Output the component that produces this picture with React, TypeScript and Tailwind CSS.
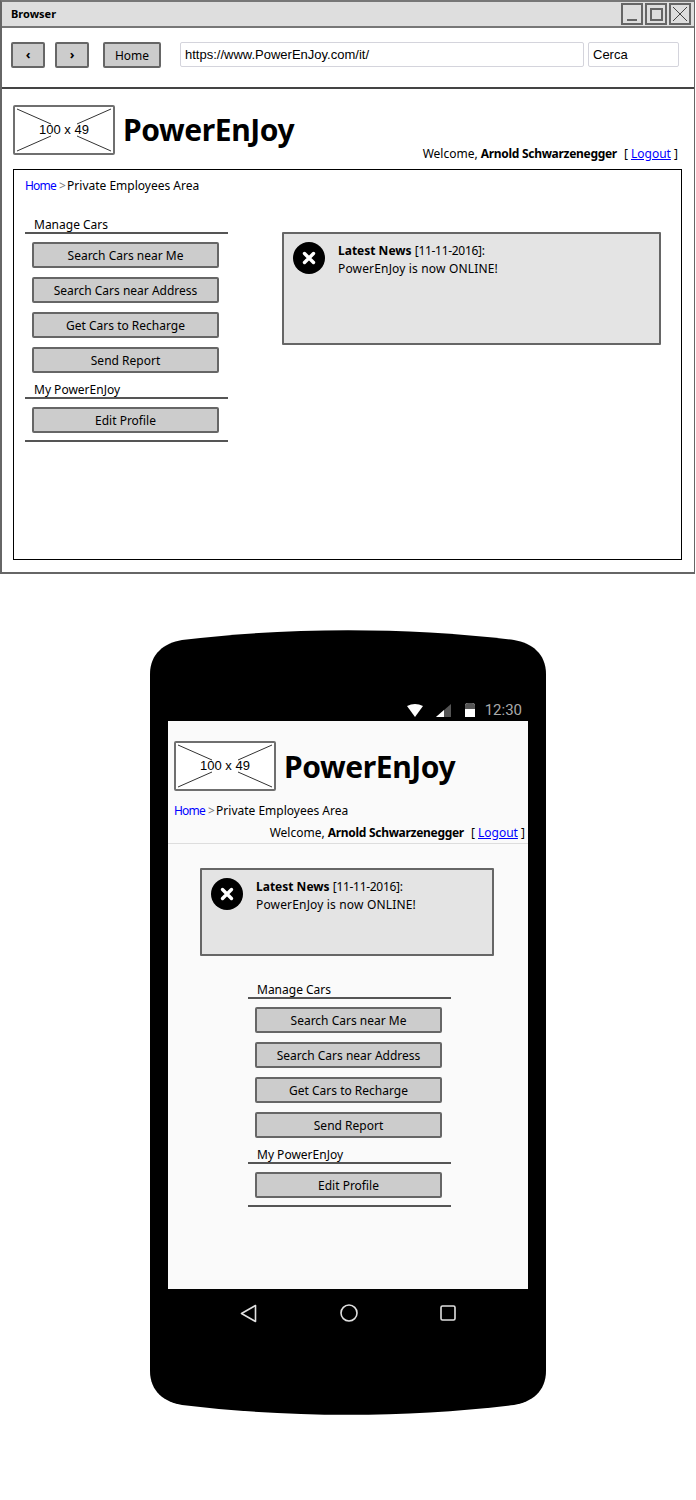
const sketch = "font-['Noto_Sans',sans-serif]";

const groups = [
  { title: "Manage Cars", items: ["Search Cars near Me", "Search Cars near Address", "Get Cars to Recharge", "Send Report"] },
  { title: "My PowerEnJoy", items: ["Edit Profile"] }
];

function Placeholder() {
  return (
    <div className="relative flex h-[50px] w-[102px] shrink-0 items-center justify-center rounded-[2px] border-2 border-[#6f6f6f] bg-white">
      <svg className="absolute inset-0 h-full w-full" viewBox="0 0 98 46" fill="none" stroke="#333" strokeWidth="1">
        <path d="M2 2 L36 17 M96 2 L62 17 M2 44 L36 29 M96 44 L62 29" />
      </svg>
      <span className="relative font-['Liberation_Sans',sans-serif] text-[13px] text-black">100 x 49</span>
    </div>
  );
}

function Logo() {
  return <h1 className={`${sketch} text-[30px] leading-none font-bold tracking-[-0.4px] text-black`}>PowerEnJoy</h1>;
}

function Crumbs() {
  return (
    <p className={`${sketch} text-[12px] leading-4 text-black`}>
      <a className="tracking-[-0.8px] text-[#0000ff]">Home</a> <span className="tracking-[-2px] text-[#777]">&gt;</span> Private Employees Area
    </p>
  );
}

function Welcome() {
  return (
    <p className={`${sketch} text-[12px] leading-4 whitespace-nowrap text-black`}>
      Welcome, <b className="tracking-[-0.3px]">Arnold Schwarzenegger</b>
      <span className="ml-[7px]">[ </span>
      <a className="text-[#0000ff] underline">Logout</a> ]
    </p>
  );
}

function Menu() {
  return (
    <div className="w-[203px]">
      {groups.map((group, g) => (
        <div key={group.title}>
          <p className={`${sketch} pl-[9px] text-[12px] leading-[15px] text-black ${g === 0 ? "" : "mt-[9px]"}`}>{group.title}</p>
          <div className="h-[2px] bg-[#555]" />
          <div className="mt-2 flex flex-col gap-[9px] pl-[7px]">
            {group.items.map((item) => (
              <button
                key={item}
                className={`${sketch} h-[26px] w-[187px] rounded-[2px] border-2 border-[#666] bg-[#cccccc] pt-px text-[12px] text-black`}
              >
                {item}
              </button>
            ))}
          </div>
        </div>
      ))}
      <div className="mt-[7px] h-[2px] bg-[#555]" />
    </div>
  );
}

function News({ className }: { className: string }) {
  return (
    <div className={`flex rounded-[1px] border-2 border-[#666] bg-[#e4e4e4] ${className}`}>
      <div className="mt-2 ml-[9px] flex h-8 w-8 shrink-0 items-center justify-center rounded-full bg-black">
        <svg width="14" height="14" viewBox="0 0 14 14" stroke="#fff" strokeWidth="3.4" strokeLinecap="round">
          <path d="M2.5 2.5 L11.5 11.5 M11.5 2.5 L2.5 11.5" />
        </svg>
      </div>
      <div className={`${sketch} mt-[8px] ml-[13px] text-[12px] leading-[18px] text-black`}>
        <p>
          <b>Latest News</b> <span className="tracking-[-0.3px]">[11-11-2016]:</span>
        </p>
        <p className="tracking-[0.16px]">PowerEnJoy is now ONLINE!</p>
      </div>
    </div>
  );
}

function BrowserWindow() {
  return (
    <div className="flex h-[574px] w-[695px] flex-col border-2 border-[#666] border-t-[#777] border-r-[1px]">
      <div className="flex h-[26px] shrink-0 items-center justify-between border-b-2 border-[#777] bg-[#dedede] pr-[3px] pl-[9px]">
        <span className={`${sketch} text-[11px] font-bold text-black`}>Browser</span>
        <div className="flex gap-[2px]">
          <div className="flex h-[22px] w-[22px] items-end justify-center border-2 border-[#666] pb-[2px]">
            <div className="h-[2px] w-[10px] bg-[#666]" />
          </div>
          <div className="flex h-[22px] w-[22px] items-center justify-center border-2 border-[#666]">
            <div className="h-[13px] w-[13px] border-2 border-[#666]" />
          </div>
          <div className="flex h-[22px] w-[22px] items-center justify-center border-2 border-[#666]">
            <svg width="16" height="16" viewBox="0 0 16 16" stroke="#444" strokeWidth="1">
              <path d="M1 1 L15 15 M15 1 L1 15" />
            </svg>
          </div>
        </div>
      </div>

      <div className="flex h-[61px] shrink-0 items-start border-b-2 border-[#444] pt-[14px] pl-[9px]">
        <button className={`${sketch} h-[26px] w-[34px] rounded-[2px] border-2 border-[#666] bg-[#ccc] text-[13px] font-bold text-black`}>‹</button>
        <button className={`${sketch} ml-[10px] h-[26px] w-[34px] rounded-[2px] border-2 border-[#666] bg-[#ccc] text-[13px] font-bold text-black`}>›</button>
        <button className={`${sketch} ml-[14px] h-[26px] w-[58px] rounded-[2px] border-2 border-[#666] bg-[#ccc] pt-px text-[12px] text-black`}>Home</button>
        <div className="ml-[19px] flex h-[25px] w-[404px] items-center rounded-[2px] border border-[#d4d4dc] px-[4px] pt-px font-['Liberation_Sans',sans-serif] text-[13px] text-black">
          https://www.PowerEnJoy.com/it/
        </div>
        <div className="ml-[4px] flex h-[25px] w-[91px] items-center rounded-[2px] border border-[#d4d4dc] px-[4px] pt-px font-['Liberation_Sans',sans-serif] text-[13px] text-black">
          Cerca
        </div>
      </div>

      <div className="flex h-[63px] shrink-0 pt-[16px] pl-[11px]">
        <Placeholder />
        <div className="ml-[8px] pt-[10px]">
          <Logo />
        </div>
        <div className="mt-[41px] ml-auto pr-[16px]">
          <Welcome />
        </div>
      </div>

      <div className="mx-[11px] mt-[17px] h-[391px] w-[669px] border border-black px-[11px] pt-[8px]">
        <Crumbs />
        <div className="mt-[23px] flex">
          <Menu />
          <News className="mt-[15px] ml-[54px] h-[113px] w-[379px]" />
        </div>
      </div>
    </div>
  );
}

function PhoneFrame() {
  return (
    <div className="relative mt-[56px] ml-[150px] h-[785px] w-[396px]">
      <svg className="absolute inset-0" width="396" height="785" viewBox="0 0 396 785">
        <path
          d="M0 44 C0 24 14 13 32 10 C140 -3 256 -3 364 10 C382 13 396 24 396 44 L396 741 C396 761 382 772 364 775 C256 788 140 788 32 775 C14 772 0 761 0 741 Z"
          fill="#000"
        />
      </svg>
      <div className="relative flex h-full flex-col px-[18px] pt-[69px]">
        <div className="flex h-[22px] shrink-0 items-center justify-end pr-[6px]">
          <svg width="16" height="13" viewBox="0 0 16 13">
            <path d="M0 2 Q8 -2 16 2 L8 13 Z" fill="#fff" />
          </svg>
          <svg className="ml-[13px]" width="15" height="13" viewBox="0 0 15 13">
            <path d="M0 13 L15 0 V13 Z" fill="#555" />
            <path d="M0 13 L8 6 V13 Z" fill="#fff" />
          </svg>
          <svg className="ml-[14px]" width="10" height="14" viewBox="0 0 10 14">
            <path d="M3 0 H7 Q10 0 10 3 V14 H0 V3 Q0 0 3 0 Z" fill="#fff" />
            <path d="M3 0 H7 Q10 0 10 3 V6 H0 V3 Q0 0 3 0 Z" fill="#555" />
          </svg>
          <span className="ml-[10px] font-['Roboto',sans-serif] text-[15px] text-[#aaa]">12:30</span>
        </div>

        <div className="h-[568px] shrink-0 bg-[#fafafa]">
          <div className="flex items-start pt-[20px] pl-[6px]">
            <Placeholder />
            <div className="ml-[8px] pt-[11px]">
              <Logo />
            </div>
          </div>
          <div className="mt-[12px] pl-[6px]">
            <Crumbs />
          </div>
          <div className="mt-[6px] flex justify-end pr-[3px]">
            <Welcome />
          </div>
          <div className="mt-[2px] h-px bg-[#ddd]" />
          <News className="mt-[24px] ml-[32px] h-[88px] w-[294px]" />
          <div className="mt-[26px] ml-[80px]">
            <Menu />
          </div>
        </div>

        <div className="flex h-[48px] items-center justify-between pr-[72px] pl-[72px]">
          <svg width="17" height="19" viewBox="0 0 17 19" fill="none" stroke="#e0e0e0" strokeWidth="1.6" strokeLinejoin="round">
            <path d="M15.5 1.5 V17.5 L1.5 9.5 Z" />
          </svg>
          <svg width="18" height="18" viewBox="0 0 18 18" fill="none" stroke="#e0e0e0" strokeWidth="1.6">
            <circle cx="9" cy="9" r="8" />
          </svg>
          <svg width="16" height="16" viewBox="0 0 16 16" fill="none" stroke="#e0e0e0" strokeWidth="1.6">
            <rect x="1" y="1" width="14" height="14" rx="1.5" />
          </svg>
        </div>
      </div>
    </div>
  );
}

export default function App() {
  return (
    <div className="h-[1500px] w-[696px] overflow-hidden bg-white">
      <BrowserWindow />
      <PhoneFrame />
    </div>
  );
}
